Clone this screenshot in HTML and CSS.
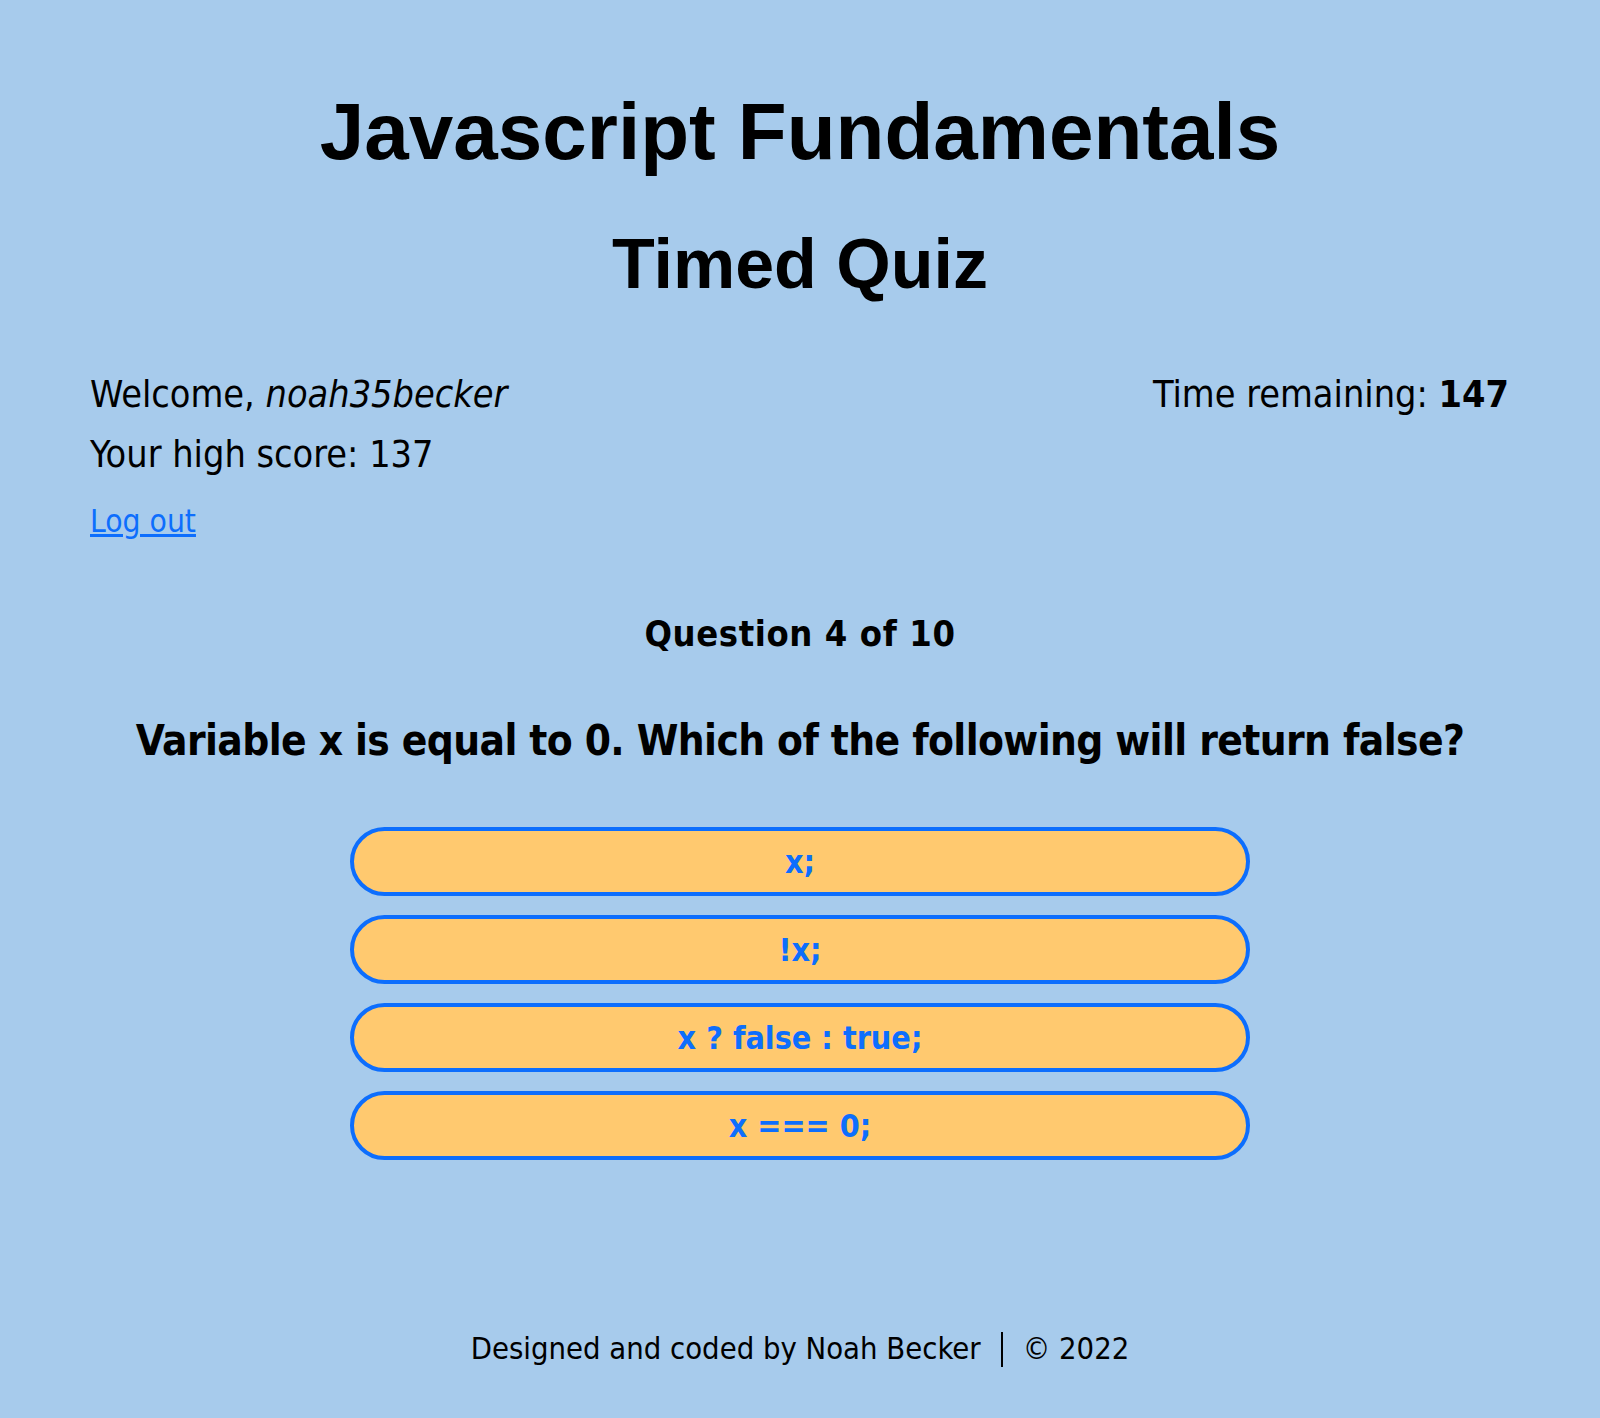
FILE: index.html
```html
<!DOCTYPE html>
<html lang="en">
<head>
<meta charset="utf-8">
<title>Javascript Fundamentals Timed Quiz</title>
<link rel="stylesheet" href="styles.css">
</head>
<body>
<header class="masthead">
  <h1 class="title">Javascript Fundamentals</h1>
  <h2 class="subtitle">Timed Quiz</h2>
</header>
<section class="info">
  <div class="user">
    <p class="line">Welcome, <em>noah35becker</em></p>
    <p class="line">Your high score: 137</p>
    <a class="logout" href="#">Log out</a>
  </div>
  <div class="timer">
    <p class="line">Time remaining: <strong>147</strong></p>
  </div>
</section>
<main class="quiz">
  <h3 class="counter">Question 4 of 10</h3>
  <h2 class="question">Variable x is equal to 0. Which of the following will return false?</h2>
  <div class="answers">
    <button class="answer">x;</button>
    <button class="answer">!x;</button>
    <button class="answer">x ? false : true;</button>
    <button class="answer">x === 0;</button>
  </div>
</main>
<footer class="footer">
  <span>Designed and coded by Noah Becker</span><span class="sep"></span><span>© 2022</span>
</footer>
</body>
</html>
```
FILE: styles.css
```css
html, body {
  margin: 0;
  padding: 0;
}
body {
  background: #a7cbec;
  color: #000;
  font-family: "DejaVu Sans Condensed", "DejaVu Sans", sans-serif;
  font-stretch: condensed;
  min-height: 1418px;
}
.masthead {
  display: flex;
  flex-direction: column;
  align-items: center;
  padding-top: 92px;
}
.title, .subtitle {
  font-family: "Liberation Sans", Arial, sans-serif;
  font-weight: 700;
  margin: 0;
  font-stretch: normal;
}
.title {
  font-size: 80px;
  line-height: 80px;
}
.subtitle {
  font-size: 70px;
  line-height: 70px;
  margin-top: 57px;
}
.info {
  display: flex;
  justify-content: space-between;
  align-items: flex-start;
  padding: 0 91px 0 90px;
  margin-top: 65px;
}
.user {
  display: flex;
  flex-direction: column;
  align-items: flex-start;
}
.line {
  margin: 0;
  font-size: 37.5px;
  line-height: 60px;
}
.line em {
  font-style: italic;
}
.logout {
  margin-top: 17px;
  font-size: 31.5px;
  line-height: 40px;
  color: #0d6efd;
  text-decoration: underline;
}
.quiz {
  display: flex;
  flex-direction: column;
  align-items: center;
  margin-top: 73px;
}
.counter {
  margin: 0;
  font-size: 36px;
  line-height: 40px;
  letter-spacing: 0.6px;
  font-weight: 700;
}
.question {
  margin: 62px 0 0;
  font-size: 42px;
  line-height: 50px;
  letter-spacing: -0.6px;
  font-weight: 700;
}
.answers {
  margin-top: 61px;
  width: 900px;
  display: flex;
  flex-direction: column;
  gap: 19px;
}
.answer {
  box-sizing: border-box;
  height: 69px;
  border: 4px solid #0d6efd;
  border-radius: 35px;
  background: #ffc96f;
  color: #0d6efd;
  font-family: inherit;
  font-stretch: condensed;
  font-size: 32px;
  font-weight: 700;
  padding: 0;
  cursor: pointer;
}
.footer {
  display: flex;
  justify-content: center;
  align-items: center;
  gap: 20px;
  margin-top: 169px;
  font-size: 30.7px;
  line-height: 40px;
}
.sep {
  width: 2px;
  height: 35px;
  background: #000;
}
```
